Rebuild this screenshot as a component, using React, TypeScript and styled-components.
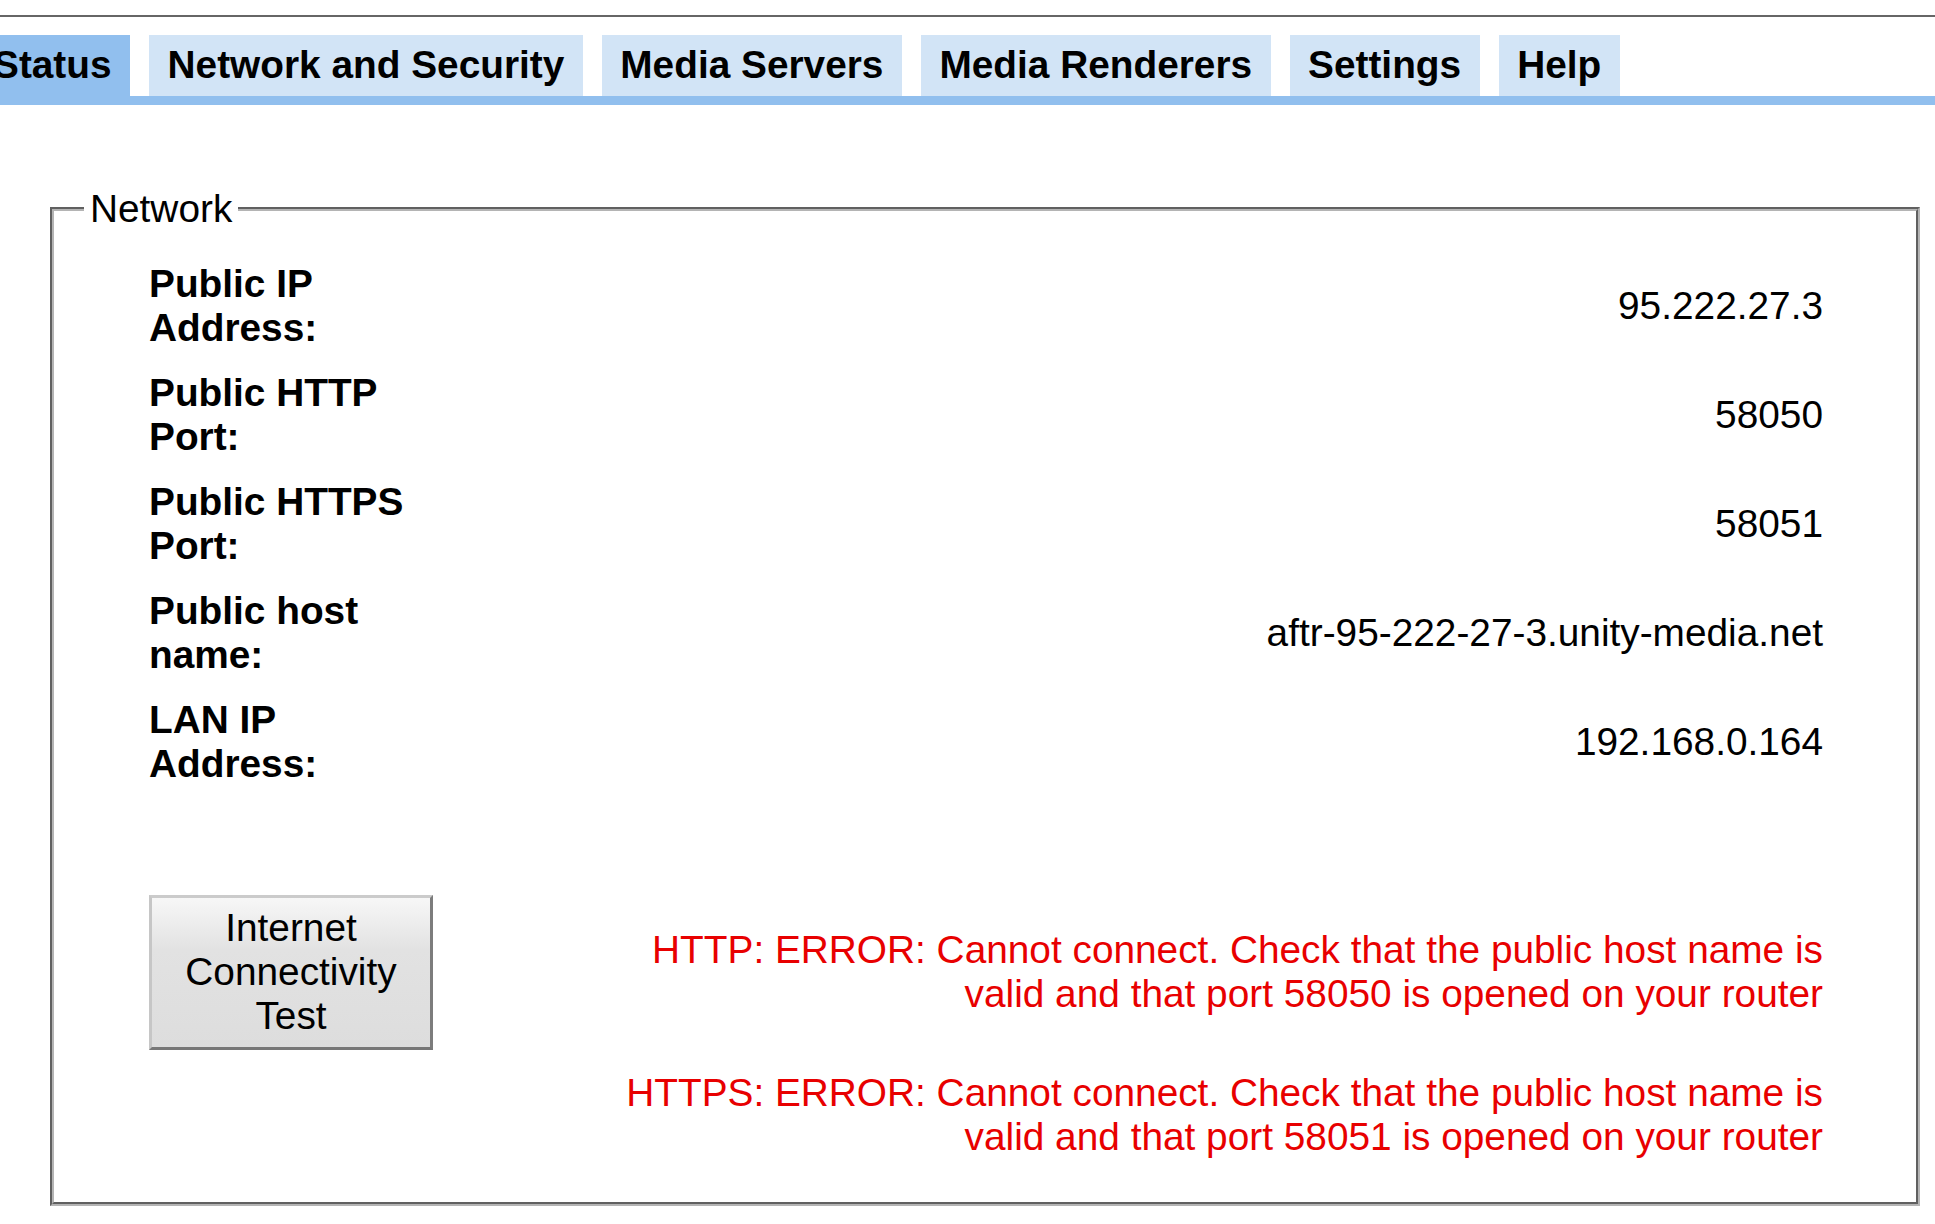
import React from 'react';
import styled, { createGlobalStyle } from 'styled-components';

const GlobalStyle = createGlobalStyle`
  html, body {
    margin: 0;
    padding: 0;
    background: #fff;
  }

  body {
    font-family: "Liberation Sans", Arial, sans-serif;
    font-size: 38.8px;
    color: #000;
    overflow: hidden;
  }
`;

const Page = styled.div`
  width: 1935px;
  padding-top: 15px;
`;

const TopRule = styled.div`
  height: 2px;
  background-color: #666;
`;

const TabNav = styled.nav`
  margin-top: 17.5px;
  border-bottom: 9px solid #91bfee;
`;

const TabList = styled.ul`
  display: flex;
  gap: 19px;
  list-style: none;
  margin: 0 0 0 -25.5px;
  padding: 0;
`;

const Tab = styled.li<{ $active?: boolean }>`
  padding: 8.5px 18.5px;
  font-weight: bold;
  line-height: normal;
  white-space: nowrap;
  background-color: ${({ $active }) => ($active ? '#91bfee' : '#d2e4f6')};
  cursor: pointer;
`;

const Fieldset = styled.fieldset`
  margin: 82px 15px 0 50px;
  padding: 20.5px 30px 32.5px;
  border: 4px groove #b4b4b4;
  min-width: 0;
`;

const Legend = styled.legend`
  padding: 0 6px;
  line-height: normal;
`;

const Content = styled.div`
  margin: 0 63px 0 65px;
`;

const InfoRow = styled.div`
  display: grid;
  grid-template-columns: 260px 1fr;
  align-items: center;
  padding: 10.5px 0;
`;

const Label = styled.div`
  font-weight: bold;
  line-height: normal;
`;

const Value = styled.div`
  text-align: right;
  line-height: normal;
`;

const TestSection = styled.div`
  margin-top: 88px;
`;

const TestRow = styled.div`
  display: grid;
  grid-template-columns: 284px 1fr;
  column-gap: 150px;
  align-items: center;
  padding: 10.5px 0;
`;

const TestButton = styled.button`
  box-sizing: border-box;
  width: 284px;
  padding: 8.5px 4px;
  font-family: inherit;
  font-size: inherit;
  line-height: normal;
  color: #000;
  border: 3px solid;
  border-color: #cbcbcb #7c7c7c #777 #c6c6c6;
  background: linear-gradient(#f7f7f7 0%, #e2e2e2 35%, #dddddd 100%);
  cursor: pointer;
`;

const ErrorText = styled.div`
  grid-column: 2;
  text-align: right;
  line-height: normal;
  color: #e80000;
`;

const tabs = ['Status', 'Network and Security', 'Media Servers', 'Media Renderers', 'Settings', 'Help'];

const info = [
  { label: 'Public IP Address:', value: '95.222.27.3' },
  { label: 'Public HTTP Port:', value: '58050' },
  { label: 'Public HTTPS Port:', value: '58051' },
  { label: 'Public host name:', value: 'aftr-95-222-27-3.unity-media.net' },
  { label: 'LAN IP Address:', value: '192.168.0.164' },
];

const App = () => {
  return (
    <>
      <GlobalStyle />
      <Page>
        <TopRule />
        <TabNav>
          <TabList>
            {tabs.map((tab) => (
              <Tab key={tab} $active={tab === 'Status'}>
                {tab}
              </Tab>
            ))}
          </TabList>
        </TabNav>

        <Fieldset>
          <Legend>Network</Legend>
          <Content>
            {info.map((row) => (
              <InfoRow key={row.label}>
                <Label>{row.label}</Label>
                <Value>{row.value}</Value>
              </InfoRow>
            ))}

            <TestSection>
              <TestRow>
                <TestButton type="button">Internet Connectivity Test</TestButton>
                <ErrorText>
                  HTTP: ERROR: Cannot connect. Check that the public host name is valid and that port 58050 is
                  opened on your router
                </ErrorText>
              </TestRow>
              <TestRow>
                <ErrorText>
                  HTTPS: ERROR: Cannot connect. Check that the public host name is valid and that port 58051 is
                  opened on your router
                </ErrorText>
              </TestRow>
            </TestSection>
          </Content>
        </Fieldset>
      </Page>
    </>
  );
};

export default App;
